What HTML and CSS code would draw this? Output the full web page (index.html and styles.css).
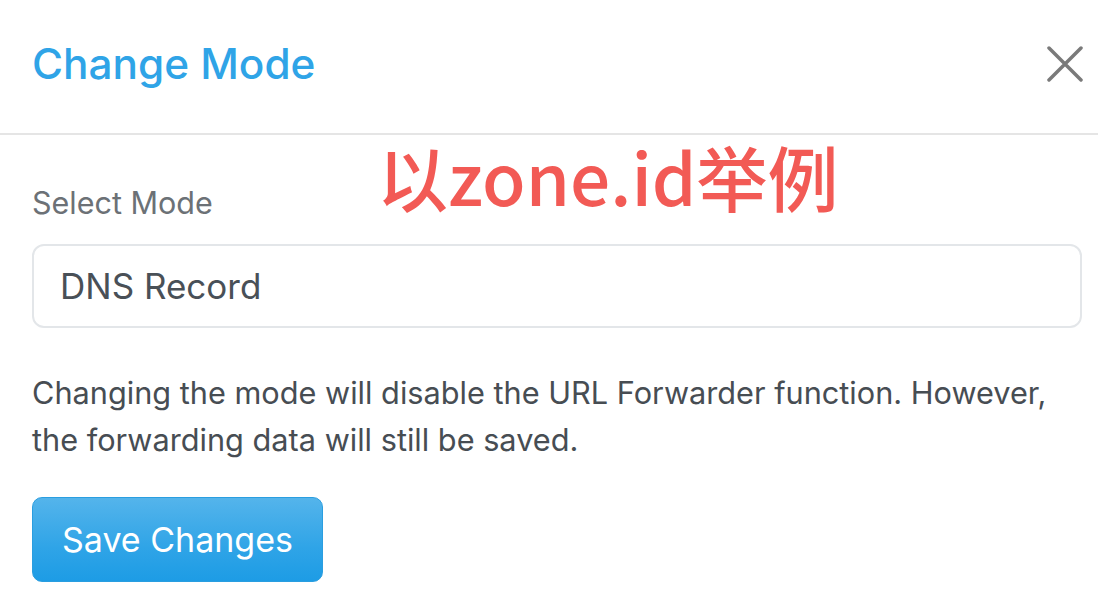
FILE: index.html
```html
<!DOCTYPE html>
<html lang="en">
<head>
    <meta charset="UTF-8">
    <meta name="viewport" content="width=device-width, initial-scale=1.0">
    <title>Change Mode</title>
    <link rel="stylesheet" href="styles.css">
</head>
<body>
    <div class="modal">
        <div class="modal-header">
            <h1 class="modal-title">Change Mode</h1>
            <button class="close-btn" aria-label="Close">
                <svg width="36" height="36" viewBox="0 0 36 36">
                    <path d="M2 2 L34 34 M34 2 L2 34" stroke="#7a7a7a" stroke-width="3.5" stroke-linecap="round" fill="none"/>
                </svg>
            </button>
        </div>

        <div class="modal-body">
            <!-- red note pasted over the screenshot -->
            <div class="note">以zone.id举例</div>

            <label class="field-label" for="mode">Select Mode</label>
            <div class="select-box" id="mode">DNS Record</div>

            <p class="hint">Changing the mode will disable the URL Forwarder function. However, the forwarding data will still be saved.</p>

            <button class="save-btn">Save Changes</button>
        </div>
    </div>
</body>
</html>
```

FILE: styles.css
```css
body {
    margin: 0;
    padding: 0;
    background-color: #fff;
    font-family: Inter, 'Liberation Sans', Arial, sans-serif;
    color: #495057;
}

.modal {
    width: 1098px;
    height: 600px;
    overflow: hidden;
}

.modal-header {
    display: flex;
    align-items: center;
    justify-content: space-between;
    padding: 38px 15px 42px 32px;
    border-bottom: 2px solid #e5e5e5;
}

.modal-title {
    margin: 0;
    font-size: 42.3px;
    font-weight: 500;
    line-height: 52.8px;
    color: #2fa4e7;
}

.close-btn {
    background: none;
    border: none;
    padding: 0;
    width: 36px;
    height: 36px;
    cursor: pointer;
}

.close-btn svg {
    display: block;
}

.modal-body {
    position: relative;
    padding: 0 16px 0 32px;
}

.note {
    position: absolute;
    left: 377px;
    top: -40px;
    font-family: 'Noto Sans CJK SC', sans-serif;
    font-size: 71px;
    font-weight: 500;
    line-height: 1;
    color: #f25a55;
}

.field-label {
    display: block;
    margin-top: 45px;
    font-size: 30.5px;
    line-height: 45px;
    color: #6c7176;
}

.select-box {
    box-sizing: border-box;
    height: 84px;
    margin-top: 19px;
    padding: 0 26px;
    display: flex;
    align-items: center;
    border: 2px solid #e3e6e9;
    border-radius: 12px;
    font-size: 35px;
    color: #495057;
}

.hint {
    margin: 41px 0 0;
    padding-right: 16px;
    font-size: 30.7px;
    line-height: 47px;
    color: #474d53;
}

.save-btn {
    margin-top: 34px;
    height: 85px;
    padding: 0 29px;
    border: 1px solid #2a9ee0;
    border-radius: 10px;
    background-image: linear-gradient(#54b4eb, #2fa4e7 60%, #1d9ce5);
    color: #fff;
    font-family: Inter, 'Liberation Sans', Arial, sans-serif;
    font-size: 34px;
    cursor: pointer;
}
```
